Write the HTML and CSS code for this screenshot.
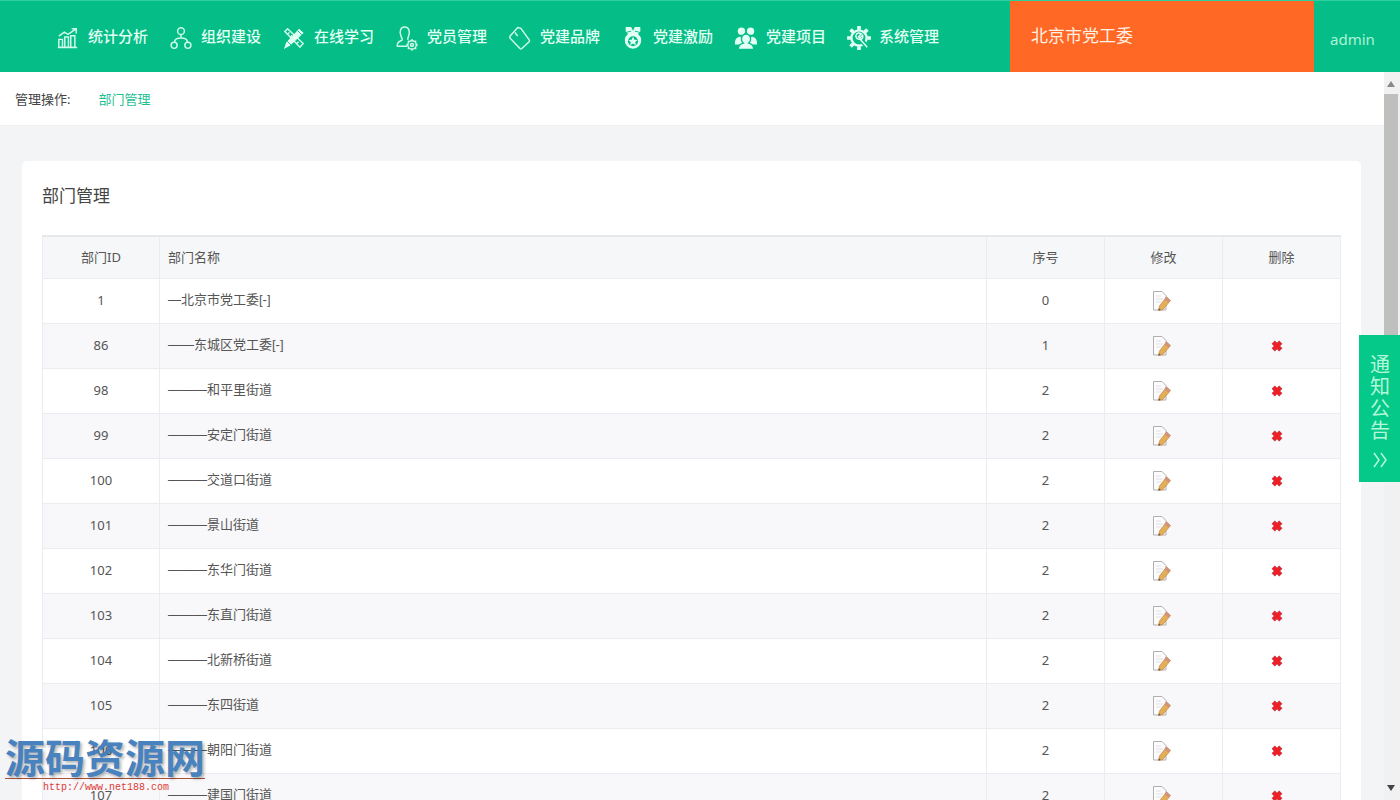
FILE: index.html
```html
<!DOCTYPE html>
<html lang="zh-CN">
<head>
<meta charset="utf-8">
<title>部门管理</title>
<link rel="stylesheet" href="styles.css">
</head>
<body>
<svg class="sprite" aria-hidden="true">
  <symbol id="edit" viewBox="0 0 20 22">
    <path d="M1.500 1.500h8.500l4 4v14.500h-12.500z" fill="#fcfcfd" stroke="#b0b0b4"/>
    <path d="M4 6h5M4 9h7M4 12h5" stroke="#e0e0e6"/>
    <path d="M14.500 7l4 3.500-7.500 9-4.500 1 1-4.500z" fill="#e3ae55" stroke="#c6924f" stroke-width=".8"/>
    <path d="M14.500 6.500l4 4-2 2.200-4-3.700z" fill="#d29280"/>
    <path d="M6.500 20.500l.5-2.200 1.700 1.600z" fill="#6c5440"/>
  </symbol>
  <symbol id="delete" viewBox="0 0 20 22">
    <path d="M3.200 7.200l7.600 7.600M10.800 7.200l-7.600 7.600" stroke="#b8485a" stroke-width="4.500"/>
    <path d="M3.600 7.600l6.800 6.800M10.400 7.600l-6.800 6.800" stroke="#f01f24" stroke-width="3.600"/>
  </symbol>
</svg>

<header class="topbar">
  <nav class="nav">
    <a class="nav-item" href="#"><svg class="nav-icon" viewBox="0 0 24 24"><path d="M2 13.500h4V22H2zM8.500 11h4v11h-4zM15 9.500h4.500V22H15zM1 22.300h21M2 10l6-4.500 4 2.500 8-5.500M16 2h5v5"/></svg>统计分析</a>
    <a class="nav-item" href="#"><svg class="nav-icon" viewBox="0 0 24 24"><circle cx="12" cy="4.500" r="3.700"/><circle cx="4.500" cy="20" r="3.300"/><circle cx="19.500" cy="20" r="3.300"/><path d="M12 8.500V12M5 16.500c0-3 3-4.500 7-4.500s7 1.500 7 4.500"/></svg>组织建设</a>
    <a class="nav-item" href="#"><svg class="nav-icon" viewBox="0 0 24 24"><path d="M2 5l3-3 17 16-3.500 4zM5 8l2-2M8 11l2-2M15 18l2-2"/><path class="solid" d="M17.500 2l5 4.500L7.500 20.500 1 24l2.500-7z"/><path class="cut" d="M16 4l4.500 4.500M4.500 15.500l4.500 4.500"/></svg>在线学习</a>
    <a class="nav-item" href="#"><svg class="nav-icon" viewBox="0 0 24 24"><path d="M12 21H1.500c-.8-4 2-5.500 5-6.500 1-1 0-2-.7-3.500C3 5 5 0 9.500 0S16 5 13.500 10.500c-.7 1.500-1 2.500-.2 3.500"/><circle cx="17.500" cy="19.500" r="4.600"/><circle cx="17.500" cy="19.500" r="1.600"/><path d="M17.500 13v2M17.500 24v2M11 19.500h2M22 19.500h2M13 15l1.400 1.400M20.600 22.600l1.400 1.400M22 15l-1.400 1.400M14.400 22.600l-1.400 1.400"/></svg>党员管理</a>
    <a class="nav-item" href="#"><svg class="nav-icon" viewBox="0 0 24 24"><path d="M1 10L9.500 .5l3.500 1L22 14c.7 1 .5 1.500 0 2l-8 7.500c-.8.700-1.500.5-2 0L1 12zM6.500 6l3 4"/></svg>党建品牌</a>
    <a class="nav-item" href="#"><svg class="nav-icon" viewBox="0 0 24 24"><path class="solid" d="M4 0h6l2 4 2-4h6v5l-2.500 2.500a9 9 0 1 1-11 0L4 5z"/><circle class="hole" cx="12" cy="15.500" r="5.500"/><path class="solid" d="M12 10.500l1.500 3.300 3.500.3-2.600 2.300.8 3.600-3.200-1.900-3.200 1.900.8-3.600L7 14.100l3.500-.3z"/><path class="cut" d="M4 6l6-1.500M20 6l-6-1.500"/></svg>党建激励</a>
    <a class="nav-item" href="#"><svg class="nav-icon" viewBox="0 0 24 24"><g class="solid"><circle cx="7" cy="4.500" r="4"/><circle cx="17" cy="4.500" r="4"/><path d="M0 19c-.5-5 1.500-8 5.500-8.500L12 15l6.500-4.500c4 .5 6 3.500 5.500 8.500z"/></g><path class="person" d="M3.500 24.500c0-4 2-6 5.500-7a5 5.500 0 1 1 6 0c3.500 1 5.500 3 5.500 7z"/></svg>党建项目</a>
    <a class="nav-item" href="#"><svg class="nav-icon gear" viewBox="0 0 24 24"><circle cx="12" cy="12" r="8.300" stroke-width="2.500"/><path d="M12-1v4M12 21v4M-1 12h4M21 12h4M2.800 2.800l3 3M18.200 18.200l3 3M21.200 2.800l-3 3M5.800 18.200l-3 3" stroke-width="4"/><path class="spanner" d="M13.500 13.500l8 8.500"/><path d="M14.500 7.500l-3 3 1.500 1.500 3-3c1 3-1 5-3.500 4.500-3.500-.500-5-3.500-3-6 1-1 3-1.500 5 0zM13 13l8 9" stroke-width="1.600"/></svg>系统管理</a>
  </nav>
  <div class="org">北京市党工委</div>
  <a class="user" href="#">admin</a>
</header>

<div class="viewport">
  <main class="page">
    <div class="crumbs"><span>管理操作:</span><a href="#">部门管理</a></div>
    <section class="card">
      <h1>部门管理</h1>
      <table class="grid">
        <colgroup><col class="c-id"><col><col class="c-small"><col class="c-small"><col class="c-small"></colgroup>
        <thead><tr><th>部门ID</th><th class="name">部门名称</th><th>序号</th><th>修改</th><th>删除</th></tr></thead>
        <tbody>
          <tr><td>1</td><td class="name">—北京市党工委[-]</td><td>0</td><td><a href="#" aria-label="修改"><svg class="act"><use href="#edit"/></svg></a></td><td></td></tr>
          <tr><td>86</td><td class="name">——东城区党工委[-]</td><td>1</td><td><a href="#" aria-label="修改"><svg class="act"><use href="#edit"/></svg></a></td><td><a href="#" aria-label="删除"><svg class="act"><use href="#delete"/></svg></a></td></tr>
          <tr><td>98</td><td class="name">———和平里街道</td><td>2</td><td><a href="#" aria-label="修改"><svg class="act"><use href="#edit"/></svg></a></td><td><a href="#" aria-label="删除"><svg class="act"><use href="#delete"/></svg></a></td></tr>
          <tr><td>99</td><td class="name">———安定门街道</td><td>2</td><td><a href="#" aria-label="修改"><svg class="act"><use href="#edit"/></svg></a></td><td><a href="#" aria-label="删除"><svg class="act"><use href="#delete"/></svg></a></td></tr>
          <tr><td>100</td><td class="name">———交道口街道</td><td>2</td><td><a href="#" aria-label="修改"><svg class="act"><use href="#edit"/></svg></a></td><td><a href="#" aria-label="删除"><svg class="act"><use href="#delete"/></svg></a></td></tr>
          <tr><td>101</td><td class="name">———景山街道</td><td>2</td><td><a href="#" aria-label="修改"><svg class="act"><use href="#edit"/></svg></a></td><td><a href="#" aria-label="删除"><svg class="act"><use href="#delete"/></svg></a></td></tr>
          <tr><td>102</td><td class="name">———东华门街道</td><td>2</td><td><a href="#" aria-label="修改"><svg class="act"><use href="#edit"/></svg></a></td><td><a href="#" aria-label="删除"><svg class="act"><use href="#delete"/></svg></a></td></tr>
          <tr><td>103</td><td class="name">———东直门街道</td><td>2</td><td><a href="#" aria-label="修改"><svg class="act"><use href="#edit"/></svg></a></td><td><a href="#" aria-label="删除"><svg class="act"><use href="#delete"/></svg></a></td></tr>
          <tr><td>104</td><td class="name">———北新桥街道</td><td>2</td><td><a href="#" aria-label="修改"><svg class="act"><use href="#edit"/></svg></a></td><td><a href="#" aria-label="删除"><svg class="act"><use href="#delete"/></svg></a></td></tr>
          <tr><td>105</td><td class="name">———东四街道</td><td>2</td><td><a href="#" aria-label="修改"><svg class="act"><use href="#edit"/></svg></a></td><td><a href="#" aria-label="删除"><svg class="act"><use href="#delete"/></svg></a></td></tr>
          <tr><td>106</td><td class="name">———朝阳门街道</td><td>2</td><td><a href="#" aria-label="修改"><svg class="act"><use href="#edit"/></svg></a></td><td><a href="#" aria-label="删除"><svg class="act"><use href="#delete"/></svg></a></td></tr>
          <tr><td>107</td><td class="name">———建国门街道</td><td>2</td><td><a href="#" aria-label="修改"><svg class="act"><use href="#edit"/></svg></a></td><td><a href="#" aria-label="删除"><svg class="act"><use href="#delete"/></svg></a></td></tr>
        </tbody>
      </table>
    </section>
  </main>
  <div class="scrollbar" aria-hidden="true">
    <svg class="arrow up" viewBox="0 0 8 6"><path d="M4 0l4 6H0z"/></svg>
    <div class="thumb"></div>
    <svg class="arrow down" viewBox="0 0 8 6"><path d="M0 0h8L4 6z"/></svg>
  </div>
</div>

<button class="notice" type="button"><span>通知公告</span><svg viewBox="0 0 16 16"><path d="M2 1l5 7-5 7M9 1l5 7-5 7"/></svg></button>

<div class="mark"><div class="mark-name">源码资源网</div><div class="mark-url">http://www.net188.com</div></div>
</body>
</html>
```

FILE: styles.css
```css
* { box-sizing: border-box; }

body {
  margin: 0;
  height: 100vh;
  display: flex;
  flex-direction: column;
  overflow: hidden;
  background: #f3f4f6;
  color: #555;
  font: 13px/20px "Noto Sans", "Noto Sans CJK SC", sans-serif;
}

a { color: inherit; text-decoration: none; }

.sprite { position: absolute; width: 0; height: 0; }

.topbar {
  flex: none;
  display: flex;
  height: 72px;
  background: #04bd87;
  border-top: 1px solid #2fcf9f;
  color: #e2fff4;
}

.nav {
  flex: 1;
  display: flex;
  align-items: center;
  gap: 22px;
  padding: 0 0 2px 57px;
}

.nav-item {
  display: flex;
  align-items: center;
  gap: 9px;
  font-size: 15px;
  font-weight: 500;
  white-space: nowrap;
}

.nav-icon {
  width: 22px;
  height: 22px;
  margin-top: 4px;
  overflow: visible;
  fill: none;
  stroke: #d0fbe9;
  stroke-width: 1.600;
}

.nav-icon .solid { fill: #e2fff4; stroke: none; }
.nav-icon .hole { fill: #04bd87; stroke: none; }
.nav-icon .cut { stroke: #04bd87; stroke-width: 1; }
.nav-icon .person { fill: #e2fff4; stroke: #04bd87; stroke-width: 1.500; }
.nav-icon .spanner { stroke: #04bd87; stroke-width: 5; }
.nav-icon.gear { stroke: #e2fff4; }

.org {
  width: 304px;
  padding: 0 21px;
  background: #ff6825;
  color: #fff0e4;
  font-size: 17px;
  line-height: 70px;
}

.user {
  width: 86px;
  padding-left: 16px;
  color: #b0f3d6;
  font-size: 15px;
  line-height: 76px;
}

.viewport { flex: 1; min-height: 0; display: flex; }
.page { flex: 1; min-width: 0; overflow: hidden; }

.crumbs {
  display: flex;
  gap: 28px;
  padding: 17px 15px 16px;
  background: #fff;
  border-bottom: 1px solid #eeeff1;
  color: #444;
}

.crumbs a { color: #1fbf93; }

.card {
  margin: 35px 23px 0 22px;
  padding: 20px 20px 40px;
  background: #fff;
  border-radius: 5px;
}

h1 {
  margin: 0 0 24px;
  color: #444;
  font-size: 17px;
  font-weight: 400;
  line-height: 30px;
}

.grid {
  width: 100%;
  table-layout: fixed;
  border-collapse: collapse;
  border-top: 2px solid #e7e8ec;
}

.c-id { width: 117px; }
.c-small { width: 118px; }

.grid th,
.grid td {
  height: 45px;
  padding: 0 8px 2px;
  border: 1px solid #ececf0;
  font-weight: 400;
  text-align: center;
}

.grid th { height: 42px; padding-bottom: 0; background: #f6f7f9; }
.grid .name { text-align: left; }
.grid td.name { font-family: "Liberation Sans", "Noto Sans CJK SC", sans-serif; }
.grid tbody tr:nth-child(even) { background: #f8f7f9; }

.act { display: block; width: 20px; height: 22px; margin: 0 auto; fill: none; }
.grid td:nth-child(n+4) { padding: 0 10px 0 7px; }

.scrollbar {
  width: 16px;
  display: flex;
  flex-direction: column;
  align-items: center;
  padding: 9px 2px 9px 0;
  background: #f1f1f2;
}

.arrow { flex: none; width: 8px; height: 6px; fill: #8a8a8a; }
.arrow.down { margin-top: auto; fill: #444; }
.thumb { width: 100%; height: 330px; margin-top: 7px; background: #bfc0bd; }

.notice {
  position: absolute;
  top: 335px;
  right: 0;
  width: 41px;
  padding: 18px 10px 14px 11px;
  border: 0;
  background: #05c988;
  color: #b4f7da;
  font: 20px/22px "Noto Sans CJK SC", sans-serif;
  text-align: center;
}

.notice span { display: block; width: 20px; word-break: break-all; }
.notice svg { display: block; width: 16px; height: 16px; margin: 11px auto 0; fill: none; stroke: #b4f7da; stroke-width: 1.500; }

.mark { position: absolute; left: 5px; bottom: 4px; opacity: .95; }

.mark-name {
  border-bottom: 1px solid #a5482f;
  color: #3f7cbc;
  font: 700 40px/44px "Noto Sans CJK SC", sans-serif;
  text-shadow: 2px 2px 3px rgba(0, 0, 0, .3);
}

.mark-url {
  color: #d8322c;
  font: 10px/17px "Liberation Mono", monospace;
  padding-left: 38px;
}
```
